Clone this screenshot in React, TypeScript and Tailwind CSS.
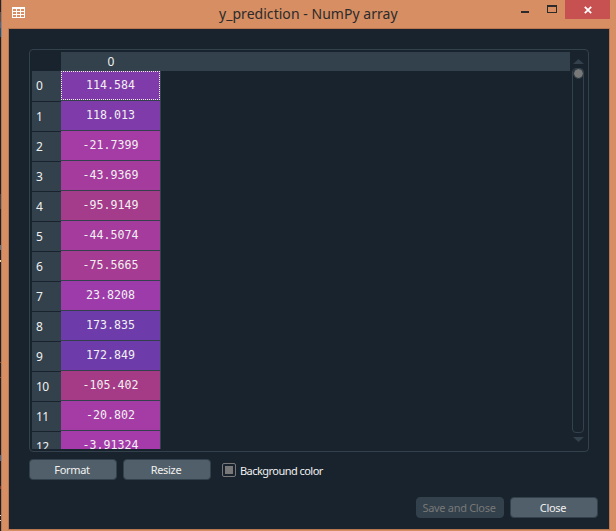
import type { ReactNode } from 'react';

const rows = [
  { value: '114.584', color: 'bg-[#803baa]' },
  { value: '118.013', color: 'bg-[#7f3baa]' },
  { value: '-21.7399', color: 'bg-[#a53ba4]' },
  { value: '-43.9369', color: 'bg-[#a53b9d]' },
  { value: '-95.9149', color: 'bg-[#a53b8b]' },
  { value: '-44.5074', color: 'bg-[#a53b9d]' },
  { value: '-75.5665', color: 'bg-[#a53b92]' },
  { value: '23.8208', color: 'bg-[#9e3baa]' },
  { value: '173.835', color: 'bg-[#6d3baa]' },
  { value: '172.849', color: 'bg-[#6d3baa]' },
  { value: '-105.402', color: 'bg-[#a53b87]' },
  { value: '-20.802', color: 'bg-[#a53ba4]' },
  { value: '-3.91324', color: 'bg-[#a53baa]' },
];

function Button({ children, disabled = false }: { children: ReactNode; disabled?: boolean }) {
  return (
    <button
      disabled={disabled}
      className={`flex h-[21px] w-[88px] items-center justify-center whitespace-nowrap rounded-[4px] border border-[#32414b] pr-[2px] text-[11px] leading-none tracking-[-0.3px] ${
        disabled ? 'bg-[#32414b] text-[#787878]' : 'bg-[#505f69] text-[#f0f0f0]'
      }`}
    >
      {children}
    </button>
  );
}

function TitleBar() {
  return (
    <header className="flex h-7 items-start text-[#2b2b2b]">
      <svg className="ml-[10px] mt-[7px] h-[11px] w-[13px]" viewBox="0 0 13 11" shapeRendering="crispEdges">
        <path
          fill="#fff"
          fillRule="evenodd"
          d="M0 0h13v11H0zM1 2v2h3V2zM5 2v2h3V2zM9 2v2h3V2zM1 5v2h3V5zM5 5v2h3V5zM9 5v2h3V5zM1 8v2h3V8zM5 8v2h3V8zM9 8v2h3V8z"
        />
      </svg>
      <h1 className="ml-[194px] w-[180px] whitespace-nowrap text-[14px] leading-7 tracking-[0.04px]">
        y_prediction - NumPy array
      </h1>
      <svg className="ml-[122px] h-[19px] w-9" viewBox="0 0 36 19" shapeRendering="crispEdges">
        <path fill="#2b2b2b" fillRule="evenodd" d="M0 11h8v2H0zM26 5h10v8H26zM27 7v5h8V7z" />
      </svg>
      <div className="ml-2 flex h-[19px] w-[45px] items-center justify-center bg-[#c75050]">
        <svg className="h-2 w-2" viewBox="0 0 8 8">
          <path d="M.8.8l6.4 6.4M7.2.8L.8 7.2" stroke="#fff" strokeWidth="1.8" />
        </svg>
      </div>
    </header>
  );
}

function ScrollBar() {
  return (
    <div className="ml-[2px] flex w-3 flex-col items-center">
      <svg className="mt-[7px] h-[5px] w-[11px]" viewBox="0 0 11 5">
        <path d="M0 5L5.5 0L11 5z" fill="#32414b" />
      </svg>
      <div className="mt-1 flex h-[365px] w-3 justify-center rounded-[4px] border border-[#32414b]">
        <div className="h-[9px] w-[9px] rounded-full bg-[#787878] outline outline-1 outline-[#32414b]" />
      </div>
      <svg className="mt-1 h-[5px] w-[11px]" viewBox="0 0 11 5">
        <path d="M0 0L5.5 5L11 0z" fill="#32414b" />
      </svg>
    </div>
  );
}

function ArrayTable() {
  return (
    <section className="flex h-[403px] w-[560px] rounded-[4px] border border-[#32414b] p-[2px]">
      <div className="h-[397px] w-[538px] overflow-hidden">
        <div className="ml-[29px] h-[19px] w-[509px] bg-[#32414b]">
          <div className="w-[100px] text-center text-[12px] leading-[19px]">0</div>
        </div>
        <div className="flex">
          <div className="w-[29px]">
            {rows.map((row, i) => (
              <div
                key={row.value}
                className={`flex items-center border-b border-[#19232d] bg-[#32414b] pl-1 text-[12px] leading-none tracking-[-0.6px] ${
                  i === 0 ? 'h-[31px]' : 'h-[30px]'
                }`}
              >
                {i}
              </div>
            ))}
          </div>
          <div className="w-[100px] border-r border-[#32414b] font-['DejaVu_Sans_Mono',monospace] text-[11.6px]">
            {rows.map((row, i) => (
              <div key={row.value} className="h-[30px] border-b border-[#32414b]">
                <div
                  className={`flex h-[29px] items-center justify-center leading-none ${row.color} ${
                    i === 0 ? 'border border-dotted border-[#f0f0f0]' : ''
                  }`}
                >
                  {row.value}
                </div>
              </div>
            ))}
          </div>
        </div>
      </div>
      <ScrollBar />
    </section>
  );
}

export default function App() {
  return (
    <div className="flex h-[531px] w-[616px] overflow-hidden bg-[#17202a] font-['Noto_Sans',sans-serif] text-[#f0f0f0]">
      <div className="w-px bg-[linear-gradient(#20252f_0_12px,#505761_12px_22px,#3e69a0_22px_28px,#0b5994_28px_37px,#17202a_37px_194px,#3c414e_194px_209px,#17202a_209px_245px,#557896_245px_250px,#17202a_250px_260px,#e0e0b0_260px_262px,#17202a_262px_362px,#80522d_362px_363px,#17202a_363px_377px,#804638_377px_378px,#17202a_378px_455px,#3a6c9e_455px_461px,#17202a_461px_486px,#783832_486px_489px,#17202a_489px_515px,#ddd_515px_516px,#17202a_516px_520px,#ddd_520px_521px,#17202a_521px)]" />
      <div className="w-[615px] border-l border-[#b97650] bg-[#d78e62]">
        <TitleBar />
        <main className="ml-[6px] h-[502px] w-[602px] border border-[#b97650] bg-[#19232d] pl-5 pt-5">
          <ArrayTable />
          <div className="mt-[7px] flex h-[21px] items-center">
            <Button>Format</Button>
            <div className="w-[6px]" />
            <Button>Resize</Button>
            <label className="ml-[11px] flex items-center gap-1 text-[11px] leading-none tracking-[-0.54px]">
              <span className="flex h-[14px] w-[14px] items-center justify-center rounded-[2px] border border-[#787878]">
                <span className="h-2 w-2 bg-[#787878]" />
              </span>
              <span className="whitespace-nowrap pt-px">Background color</span>
            </label>
          </div>
          <div className="ml-[387px] mt-[17px] flex gap-[6px]">
            <Button disabled>Save and Close</Button>
            <Button>Close</Button>
          </div>
        </main>
      </div>
    </div>
  );
}
